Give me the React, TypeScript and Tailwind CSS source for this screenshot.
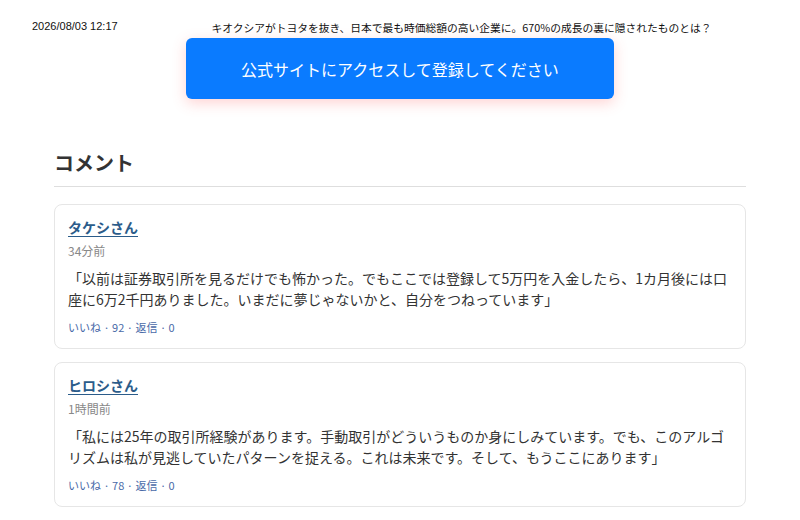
import React from 'react';

type Comment = {
  name: string;
  time: string;
  text: string;
  likes: number;
  replies: number;
};

const comments: Comment[] = [
  {
    name: 'タケシさん',
    time: '34分前',
    text: '「以前は証券取引所を見るだけでも怖かった。でもここでは登録して5万円を入金したら、1カ月後には口座に6万2千円ありました。いまだに夢じゃないかと、自分をつねっています」',
    likes: 92,
    replies: 0,
  },
  {
    name: 'ヒロシさん',
    time: '1時間前',
    text: '「私には25年の取引所経験があります。手動取引がどういうものか身にしみています。でも、このアルゴリズムは私が見逃していたパターンを捉える。これは未来です。そして、もうここにあります」',
    likes: 78,
    replies: 0,
  },
];

const jp = "font-['Noto_Sans_CJK_JP','Noto_Sans',sans-serif]";

const CommentCard = ({ c }: { c: Comment }) => (
  <div className="border border-[#e6e6e6] rounded-lg px-[13px] pt-[11px] pb-[12px] bg-white">
    <a href="#" className="block w-fit text-[14px] font-bold text-[#2b5c8a] underline underline-offset-[3px] leading-[22px]">
      {c.name}
    </a>
    <div className="text-[12px] text-[#888] mt-[4px] leading-[18px]">{c.time}</div>
    <p className="text-[14px] text-[#333] leading-[21px] mt-[8px]">{c.text}</p>
    <div className="text-[11px] text-[#4a6aa8] mt-[8px] leading-[18px]">
      いいね · {c.likes} · 返信 · {c.replies}
    </div>
  </div>
);

export default function App() {
  return (
    <div className={`w-[800px] h-[520px] bg-white overflow-hidden ${jp}`}>
      <div className="flex items-start pt-[19px] pl-[32px]">
        <div className="text-[11px] text-[#111] font-['Liberation_Sans',Arial,sans-serif] leading-[14px] w-[85px] whitespace-nowrap">
          2026/08/03 12:17
        </div>
        <div className="flex-1 text-center text-[10.75px] text-[#111] leading-[14px] mt-[2px] pl-[6px] whitespace-nowrap">
          キオクシアがトヨタを抜き、日本で最も時価総額の高い企業に。670%の成長の裏に隠されたものとは？
        </div>
      </div>
      <div className="flex justify-center mt-[3px]">
        <a
          href="#"
          className="w-[428px] h-[61px] flex items-center justify-center bg-[#0a7bff] text-white text-[16px] rounded-[6px] shadow-[0_4px_14px_rgba(255,80,80,0.25)]"
        >
          公式サイトにアクセスして登録してください
        </a>
      </div>
      <div className="w-[692px] mx-auto mt-[50px]">
        <h2 className="text-[20px] font-bold text-[#333] leading-[28px] pb-[9px] border-b border-[#dedede]">
          コメント
        </h2>
        <div className="flex flex-col gap-[13px] mt-[17px]">
          {comments.map((c) => (
            <CommentCard key={c.name} c={c} />
          ))}
        </div>
      </div>
    </div>
  );
}
